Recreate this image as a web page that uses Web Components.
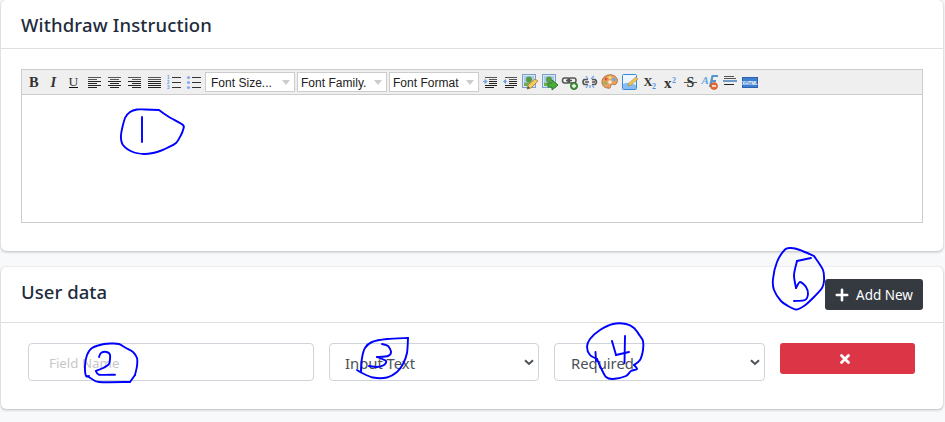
<!DOCTYPE html>
<html lang="en"><head><meta charset="utf-8"><title>Withdraw Instruction</title>
<style>
body{margin:0;background:#f8f9fb;font-family:"Noto Sans","Open Sans",sans-serif;color:#212b3c;overflow:hidden}
</style></head><body>
<withdraw-page></withdraw-page>
<script>
const define=(name,html,init)=>customElements.define(name,class extends HTMLElement{
  constructor(){super();this.attachShadow({mode:'open'});
    const t=document.createElement('template');t.innerHTML=html;
    this.shadowRoot.append(t.content.cloneNode(true));}
  connectedCallback(){if(init)init(this,this.shadowRoot);}
});

define('panel-card',`<style>
:host{display:flex;flex-direction:column;box-sizing:border-box;background:#fff;border-radius:5px;box-shadow:0 0 1px rgba(0,0,0,.16),0 1px 3px rgba(0,0,0,.24)}
header{display:flex;align-items:center;justify-content:space-between;box-sizing:border-box;height:var(--head);padding:0 20px;border-bottom:1px solid #dfdfdf}
h2{margin:0;font-size:18.5px;line-height:26px;font-weight:500;white-space:nowrap;letter-spacing:var(--track,0)}
</style><header><h2><slot name="title"></slot></h2><slot name="action"></slot></header><slot></slot>`);

const lines=(rows,color='#222')=>rows.map(([x,y,w],i)=>`<rect x="${x}" y="${y}" width="${w}" height="1" fill="${i<2&&color=='#222'?'#555':color}"/>`).join('');
const align=(s,w)=>lines([5,7,9,11,13,15].map((y,i)=>i%2?[s,y,w]:[4,y,13]));
const picture=`<rect x="2.500" y="2.500" width="13" height="13" fill="#d7e6f4" stroke="#7b9fc7"/><rect x="4" y="4" width="10" height="10" fill="#a7cbea"/><circle cx="9" cy="7.500" r="3" fill="#5a9b41"/><path d="M4 14v-3l5-1 5 1v3z" fill="#70ad50"/>`;
const pencil=`<path d="M7 17l1-4 7-6 3 2-7 7z" fill="#f4ca60" stroke="#ad7b31" stroke-width=".8"/><path d="M7 17l1-3 2 2z" fill="#555"/>`;
const text=(s,x,y,size,style='')=>`<text x="${x}" y="${y}" font-size="${size}" ${style}>${s}</text>`;
const icons={
bold:text('B',5,15,14.5,'font-weight="700"'),
italic:text('I',6.5,15,14.5,'font-weight="700" font-style="italic"'),
underline:text('U',4.5,13.5,13.5)+lines([[5,15,9]],'#111'),
left:align(4,9),center:align(6,9),right:align(8,9),justify:align(4,13),
ordered:lines([[8,5,9],[8,10,9],[8,15,9]],'#333')+['1','2','3'].map((n,i)=>`<text x="3" y="${6.7+i*5}" font-size="4.500" font-weight="700" style="fill:#5f98e2;font-family:'Liberation Sans',sans-serif">${n}</text>`).join(''),
bullets:lines([[8,5,9],[8,10,9],[8,15,9]],'#333')+[5.5,10.5,15.5].map(y=>`<circle cx="4.500" cy="${y}" r="1.600" fill="#84aceb"/>`).join(''),
indent:lines([[5,5,12],[9,7,8],[9,9,8],[9,11,8],[5,13,12],[5,15,9]])+`<path d="M3 9.500h3M5 7.500l2 2L5 11.500z" fill="#71a3e6" stroke="#71a3e6"/>`,
outdent:lines([[5,5,12],[9,7,8],[9,9,8],[9,11,8],[5,13,12],[5,15,9]])+`<path d="M7 9.500H4M5.500 7.500l-2 2 2 2z" fill="#71a3e6" stroke="#71a3e6"/>`,
image:picture+pencil,
upload:picture+`<path d="M8 11h4V8l6 5-6 5v-3H8z" fill="#4dae37" stroke="#2b7d25"/>`,
link:`<g fill="none" stroke="#555" stroke-width="1.500"><rect x="2.500" y="6" width="7" height="5" rx="2.200"/><rect x="8" y="6" width="8" height="5" rx="2.200"/><path d="M6 8.500h6"/></g><circle cx="14" cy="14" r="3.500" fill="#4b9d3a" stroke="#287226"/><path d="M12 14h4M14 12v4" stroke="#fff" stroke-width="1.300"/>`,
unlink:`<g fill="none" stroke="#555" stroke-width="1.700"><path d="M8 7.500H4q-2 2.500 0 5h4M12 7.500h3q3 2.500 0 5h-3M5 10h4M12 10h3"/></g><path d="M6 4l2 3M14 4l-3 3M6 16l2-3M10 13v3M14 16l-2-3" stroke="#6fa5e9" stroke-width="1.300"/>`,
palette:`<path d="M2 10C2 5 7 2 12 3c5 1 7 6 4 9-2 2-3-1-5 1-1 2 0 4-3 3-4 0-6-3-6-6z" fill="#e5a267" stroke="#b57142"/><circle cx="6" cy="7" r="1.500" fill="#e55237"/><circle cx="10" cy="5.500" r="1.500" fill="#f5df72"/><circle cx="14" cy="7.500" r="1.700" fill="#6ca7e8"/><circle cx="5.500" cy="11" r="1.500" fill="#85b84c"/><circle cx="10" cy="10" r="1.800" fill="#fff0d8"/>`,
page:`<rect x="2.500" y="2.500" width="14" height="15" rx="1" fill="#edf6ff" stroke="#3989d9"/><path d="M3 12q5-3 13 1v4H3z" fill="#89bdf0"/><path d="M8 14l1-3 7-6 2 2-7 6z" fill="#f3c653" stroke="#a68142" stroke-width=".6"/>`,
sub:text('X',3.5,14,12.5,'font-weight="700"')+text('2',12,17,8,'font-weight="700" style="fill:#5792df"'),
sup:text('x',4,16,15,'font-weight="700"')+text('2',12,10.5,8,'font-weight="700" style="fill:#5792df"'),
strike:text('S',6.500,15,14,'font-weight="700"')+lines([[4,10,13]],'#222'),
clear:`<g style="font-family:'Liberation Sans',sans-serif" font-style="italic" font-weight="700"><text x="1.500" y="12" font-size="11" style="fill:#62a4e2">A</text></g><path d="M10 15L12.500 4H18M11 9h5" fill="none" stroke="#5795cf" stroke-width="2.200"/><circle cx="14" cy="14" r="3.500" fill="#e66b31" stroke="#c94d1c" stroke-width=".6"/><path d="M12 14h4" stroke="#fff" stroke-width="1.400"/>`,
rule:lines([[4,4,10],[4,6,12],[4,12,10]])+`<rect x="3" y="8" width="14" height="2" fill="#7199c7"/>`,
html:`<rect x="2" y="5" width="16" height="11" fill="#3e7fcf"/><rect x="2.500" y="5.500" width="15" height="10" fill="none" stroke="#2d62b0"/><text x="10" y="12.500" text-anchor="middle" font-size="4.600" font-weight="700" style="fill:#fff;font-family:'Liberation Sans',sans-serif">XHTML</text>`
};
define('tool-icon',`<style>:host{display:block;flex:0 0 20px;width:20px;height:20px}svg{display:block}text{font-family:"Liberation Serif",serif;fill:#333}</style><svg width="20" height="20" viewBox="0 0 20 20"></svg>`,(e,r)=>r.querySelector('svg').innerHTML=icons[e.getAttribute('name')]);

define('tool-select',`<style>:host{display:flex;align-items:center;box-sizing:border-box;flex:0 0 90px;height:20px;margin:0 1px;padding:1px 4px 0 3px;background:#fff;border:1px solid #ccc;font:12px/18px "Liberation Sans",Arial,sans-serif;color:#222;letter-spacing:.02px;white-space:nowrap;justify-content:space-between}:host(:first-of-type){padding-left:5px}i{border:4px solid transparent;border-top:5px solid #ccc;border-bottom:0}</style><span><slot></slot></span><i></i>`);

define('rich-editor',`<style>:host{display:flex;flex-direction:column;box-sizing:border-box;margin:20px 20px 0;height:154px;border:1px solid #ccc}nav{display:flex;align-items:center;height:24px;padding-left:2px;background:#efefef;border-bottom:1px solid #ccc}</style><nav></nav>`,(e,r)=>{
 const a=n=>`<tool-icon name="${n}"></tool-icon>`;
 r.querySelector('nav').innerHTML='bold italic underline left center right justify ordered bullets'.split(' ').map(a).join('')+['Font Size...','Font Family.','Font Format'].map(n=>`<tool-select>${n}</tool-select>`).join('')+'indent outdent image upload link unlink palette page sub sup strike clear rule html'.split(' ').map(a).join('');
});

define('field-box',`<style>:host{display:flex;align-items:center;justify-content:space-between;box-sizing:border-box;height:38px;padding:2px 4px 0 15px;border:1px solid #ced4da;border-radius:4px;background:#fff;color:#495057;font-size:14.800px;white-space:nowrap}svg{display:none;margin-top:-2px}:host([select]) svg{display:block}:host([hint]){font-size:13.300px;color:#c8c8c8;padding-left:20px;padding-top:1px}</style><span><slot></slot></span><svg width="10" height="7" viewBox="0 0 10 7"><path d="M1 1.300l4 3.700 4-3.700" fill="none" stroke="#495057" stroke-width="2"/></svg>`);

define('action-button',`<style>:host{display:flex;align-items:center;justify-content:center;box-sizing:border-box;height:31px;border-radius:3px;color:#fff;font-size:13.500px;gap:7px;white-space:nowrap}:host([tone=dark]){width:98px;background:#343a40}:host([tone=danger]){background:#dc3545;gap:0;padding-right:6px}svg{display:block}span{padding-top:1px}</style><slot name="icon"></slot><span><slot></slot></span>`);

// Each stroke is a list of points joined by a smooth spline.
const smooth=s=>{const n=s.trim().split(/[ ,]+/).map(Number),p=[];
 for(let i=0;i<n.length;i+=2)p.push([n[i],n[i+1]]);
 let d='M'+p[0];
 for(let i=0;i<p.length-1;i++){const a=p[i-1]||p[i],b=p[i],c=p[i+1],e=p[i+2]||c;
  d+=`C${b[0]+(c[0]-a[0])/7} ${b[1]+(c[1]-a[1])/7} ${c[0]-(e[0]-b[0])/7} ${c[1]-(e[1]-b[1])/7} ${c}`;}
 return d;};
const strokes=[
'159,110 145,109.500 137,109.500 130,112 125,118 121,135 123,145 133,152 144,154 153,153 160,151 167,148 176,143 181,135 183,130 183,125 169,117 159,110',
'142,117 142,142',
'89,376 86,376 85,366 87,355 92,348 104,344 112,343.500 119,344 126,348 133,352 137,358 137,366 135,375',
'135,375 130,382',
'130,382 99,382 92,379 87,376',
'99,357 101,353 106.500,352 110,355 109,364 103,368 96,371',
'96,371 99,374.700 115,374.700',
'357,370 362,373 373,377.500 387,377.500 397,372 403,364 407,353 408,338',
'408,338 387,339 372,342 365,348 362,358 361,371',
'382,344 388,346 391,352 388,356 377,357','377,357 386,361 384,365 377,367 369,366',
'595.500,352 596,361','597,359 590,355 587,347 590,339 600,330 613,324 626,324 634,328 640,336 643,341 643,350 640,360 634,365',
'634,365 637,369 631,371 626,376 613,379 606,377 601,368 597,359',
'612,341 616,355','616,355 629,352','625,336 624.500,363',
'814,256 800,250 791,248 785,249.500 777,262 773,279 774,290 781,301 788,306 796,309.500 804,306 813,298 822,288 824,281 823,270 814,256',
'811,258 797,261','797,261 794,275 796,288','796,288 800,282 806,287 808,294 805,300 794,301'];
define('ink-notes',`<style>:host{position:absolute;left:0;top:0;pointer-events:none}svg{display:block}</style><svg width="945" height="422" viewBox="0 0 945 422" fill="none" stroke="#0000ff" stroke-width="1.900" stroke-linecap="round" stroke-linejoin="round">${strokes.map(s=>`<path d="${smooth(s)}"/>`).join('')}</svg>`);

define('withdraw-page',`<style>
:host{display:block;position:relative;width:945px;height:422px}
main{display:flex;flex-direction:column;gap:16px;padding:0 2px 0 1px}
.instruction{height:251px;--head:49px;--track:.15px}.data{height:142px;--head:56px;--track:.05px}
.row{display:grid;grid-template-columns:286px 210px 211px 135px;column-gap:15px;padding:20px 0 0 27px;align-items:start}
.required{padding-left:16px}
[slot=title]{display:block}.instruction [slot=title]{padding-top:2px}.data [slot=title]{padding-bottom:5px}
</style><main>
<panel-card class="instruction"><span slot="title">Withdraw Instruction</span><rich-editor></rich-editor></panel-card>
<panel-card class="data"><span slot="title">User data</span><action-button slot="action" tone="dark"><svg slot="icon" width="14" height="14"><path d="M7 1.800v10.400M1.800 7h10.400" stroke="#fff" stroke-width="2.600" stroke-linecap="round"/></svg>Add New</action-button>
<div class="row"><field-box hint>Field Name</field-box><field-box select>Input Text</field-box><field-box select class="required">Required</field-box><action-button tone="danger"><svg slot="icon" width="12" height="12"><path d="M2.500 2.500l7 7M9.500 2.500l-7 7" stroke="#fff" stroke-width="2.800" stroke-linecap="round"/></svg></action-button></div></panel-card>
</main><ink-notes></ink-notes>`);
</script></body></html>
